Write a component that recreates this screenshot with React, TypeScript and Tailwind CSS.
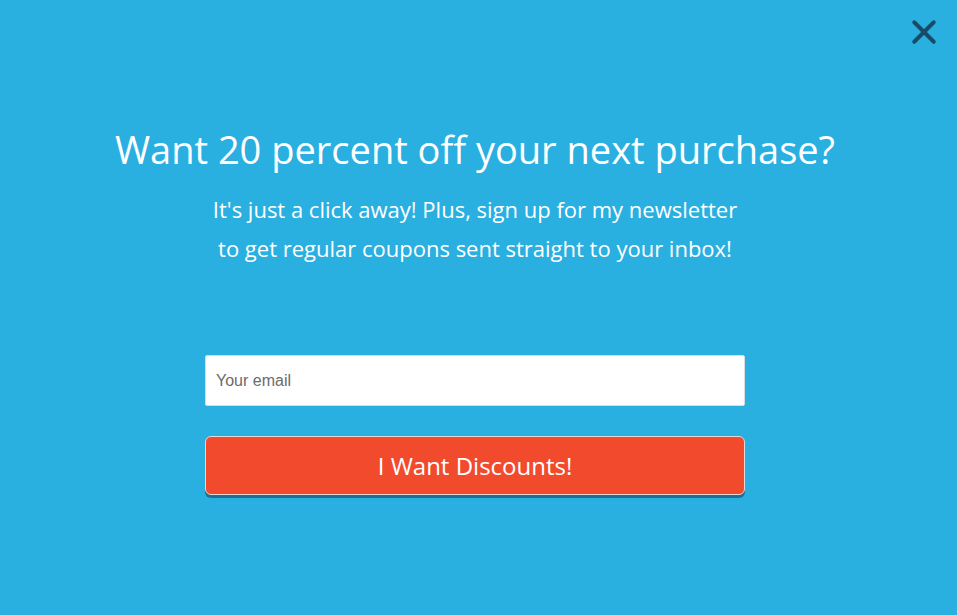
import { useState } from "react";

export default function App() {
  const [email, setEmail] = useState("");

  return (
    <main className="relative flex h-[615px] w-full flex-col items-center bg-[#2aafe1] pr-[7px] font-['Open_Sans',sans-serif] text-white">
      <button
        aria-label="Close"
        className="absolute right-[20px] top-[19px] grid h-[26px] w-[26px] place-items-center text-[#184c66]"
      >
        <svg viewBox="0 0 24 24" className="h-[26px] w-[26px]" fill="none" stroke="currentColor" strokeWidth={3.6} strokeLinecap="round">
          <path d="M3 3 L21 21 M21 3 L3 21" />
        </svg>
      </button>

      <h1 className="mt-[122px] text-[38px] leading-[54px]">
        Want 20 percent off your next purchase?
      </h1>
      <p className="mt-[14px] text-center text-[22px] leading-[39px]">
        It's just a click away! Plus, sign up for my newsletter
        <br />
        to get regular coupons sent straight to your inbox!
      </p>

      <form className="mt-[87px] flex w-[540px] flex-col gap-[30px]" onSubmit={(e) => e.preventDefault()}>
        <input
          type="email"
          value={email}
          onChange={(e) => setEmail(e.target.value)}
          placeholder="Your email"
          className="h-[51px] w-full rounded-[2px] border border-[#d6dde2] bg-white px-[10px] font-['Liberation_Sans',sans-serif] text-[16px] text-[#333] placeholder:text-[#6b6b6b] outline-none"
        />
        <button
          type="submit"
          className="h-[59px] w-full rounded-[6px] border border-[#e8d6d2] bg-[#f14a2d] text-[24px] text-white shadow-[0_3px_0_#1e6f94]"
        >
          I Want Discounts!
        </button>
      </form>
    </main>
  );
}
